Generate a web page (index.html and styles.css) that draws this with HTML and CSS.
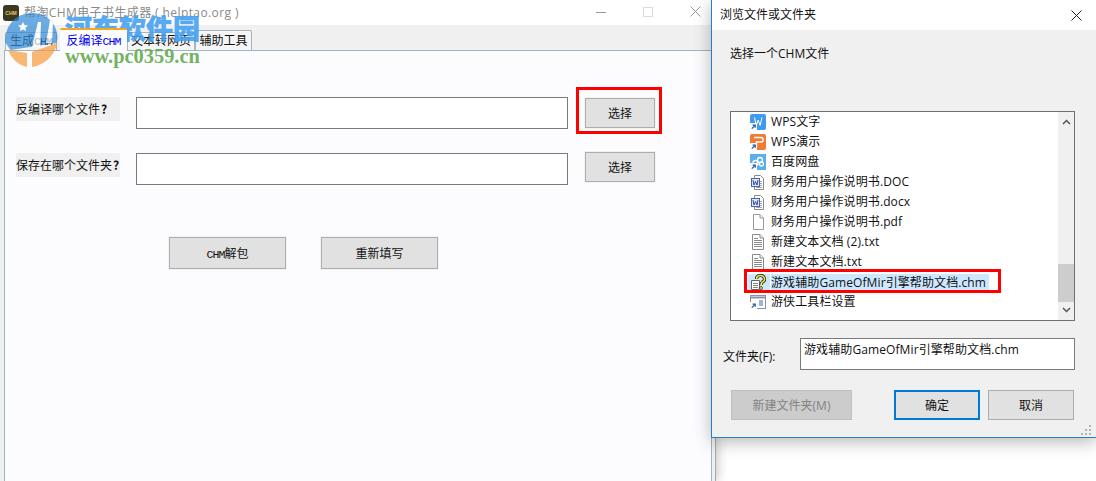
FILE: index.html
```html
<!DOCTYPE html>
<html lang="zh-CN">
<head>
<meta charset="utf-8">
<title>帮淘CHM电子书生成器</title>
<link rel="stylesheet" href="styles.css">
</head>
<body>
<svg class="defs" width="0" height="0" aria-hidden="true">
  <defs>
    <symbol id="doc" viewBox="0 0 16 16">
      <path d="M3.500 .5h6.500l3.500 3.500v11.500h-10z" fill="#fff" stroke="#9a9a9a"/>
      <path d="M10 .5v3.500h3.500" fill="#f0f0f0" stroke="#9a9a9a"/>
    </symbol>
    <symbol id="txt" viewBox="0 0 16 16">
      <path d="M2.500 .5h7.500l3.500 3.500v11.500h-11z" fill="#fff" stroke="#8a8a8a"/>
      <path d="M10 .5v3.500h3.500" fill="#eee" stroke="#8a8a8a"/>
      <path d="M4 4.500h4M4 6.500h8M4 8.500h8M4 10.500h8M4 12.500h8" stroke="#8a8a8a" fill="none"/>
    </symbol>
    <symbol id="word" viewBox="0 0 16 16">
      <path d="M4.500 1.500h6l3 3v11h-9z" fill="#fff" stroke="#8a8a8a"/>
      <path d="M10 7.500h2M10 9.500h2M10 11.500h2M6 13.500h6" stroke="#9aa4c4"/>
      <rect x="1.500" y="4.500" width="8" height="8" fill="#dfe6f6" stroke="#4a62a8"/>
      <path d="M3 6l1 5 1.500-3.500L7 11l1-5" stroke="#2f4da0" fill="none"/>
    </symbol>
    <symbol id="arrow" viewBox="0 0 8 8">
      <rect width="8" height="8" fill="#fff"/>
      <path d="M2 6.500l3-3M3 2.500h3v3" stroke="#1f4f9c" stroke-width="1.300" fill="none"/>
    </symbol>
  </defs>
</svg>

<main class="app">
  <header class="app-title">
    <span class="app-logo">CHM</span>
    <span class="app-name">帮淘CHM电子书生成器 ( helptao.org )</span>
    <span class="win-btns">
      <svg width="10" height="10" viewBox="0 0 10 10"><path d="M0 5.500h10" stroke="#999"/></svg>
      <svg width="10" height="10" viewBox="0 0 10 10"><rect x=".5" y=".5" width="9" height="9" fill="none" stroke="#ddd"/></svg>
      <svg width="11" height="11" viewBox="0 0 11 11"><path d="M.5 .5l10 10M10.500 .5l-10 10" stroke="#999"/></svg>
    </span>
  </header>
  <nav class="tabs">
    <span class="tab tab-first">生成<span class="mono">CHM</span></span>
    <span class="tab tab-active">反编译<span class="mono">CHM</span></span>
    <span class="tab tab-third">文本转网页</span>
    <span class="tab tab-fourth">辅助工具</span>
  </nav>
  <section class="panel">
    <div class="form">
      <span class="label">反编译哪个文件<b>?</b></span>
      <span class="field"></span>
      <button class="btn btn-pick-a">选择</button>
      <span class="label">保存在哪个文件夹<b>?</b></span>
      <span class="field"></span>
      <button class="btn btn-pick-b">选择</button>
    </div>
    <div class="actions">
      <button class="btn btn-wide"><span class="mono">CHM</span>解包</button>
      <button class="btn btn-wide">重新填写</button>
    </div>
    <span class="red-box red-pick"></span>
  </section>
</main>

<aside class="dialog">
  <header class="dlg-title">
    <span class="raise">浏览文件或文件夹</span>
    <svg width="11" height="11" viewBox="0 0 11 11"><path d="M.5 .5l10 10M10.500 .5l-10 10" stroke="#222"/></svg>
  </header>
  <div class="dlg-body">
    <p class="dlg-prompt">选择一个CHM文件</p>
    <div class="list">
      <ul class="items">
        <li class="item">
          <svg class="ico" viewBox="0 0 16 16"><rect width="16" height="16" rx="2" fill="#3f9bf0"/><path d="M4.500 3.500l1.800 8 1.900-5.500 1.900 5.500 1.800-8" stroke="#fff" fill="none"/><use href="#arrow" width="7" height="7" y="9"/></svg>
          <span class="raise">WPS文字</span>
        </li>
        <li class="item">
          <svg class="ico" viewBox="0 0 16 16"><rect width="16" height="16" rx="2" fill="#f47a32"/><path d="M4 3.500h7a2.200 2.200 0 0 1 0 4.500H6.500v5" stroke="#fff" stroke-width="1.400" fill="none"/><use href="#arrow" width="7" height="7" y="9"/></svg>
          <span class="raise">WPS演示</span>
        </li>
        <li class="item">
          <svg class="ico" viewBox="0 0 16 16"><rect width="16" height="16" fill="#5aaef0"/><circle cx="5.500" cy="9" r="2.500" fill="none" stroke="#fff" stroke-width="1.300"/><circle cx="10" cy="6" r="2.500" fill="none" stroke="#fff" stroke-width="1.300"/><circle cx="11.500" cy="10" r="2" fill="none" stroke="#fff" stroke-width="1.300"/><use href="#arrow" width="7" height="7" y="9"/></svg>
          <span class="raise">百度网盘</span>
        </li>
        <li class="item"><svg class="ico"><use href="#word"/></svg><span class="raise">财务用户操作说明书.DOC</span></li>
        <li class="item"><svg class="ico"><use href="#word"/></svg><span class="raise">财务用户操作说明书.docx</span></li>
        <li class="item"><svg class="ico"><use href="#doc"/></svg><span class="raise">财务用户操作说明书.pdf</span></li>
        <li class="item"><svg class="ico"><use href="#txt"/></svg><span class="raise">新建文本文档 (2).txt</span></li>
        <li class="item"><svg class="ico"><use href="#txt"/></svg><span class="raise">新建文本文档.txt</span></li>
        <li class="item item-selected">
          <svg class="ico" viewBox="0 0 16 16"><path d="M1.500 6.500h8v9h-8z" fill="#fff" stroke="#666"/><path d="M3 9.500h5M3 11.500h5M3 13.500h5" stroke="#888"/><path d="M6.500 5a4 3.500 0 1 1 6 3c-1.500 1-1.500 1.500-1.500 3" fill="none" stroke="#222" stroke-width="3.200"/><path d="M6.500 5a4 3.500 0 1 1 6 3c-1.500 1-1.500 1.500-1.500 3" fill="none" stroke="#f5e23c" stroke-width="1.600"/><circle cx="11" cy="14" r="1.500" fill="#f5e23c" stroke="#222" stroke-width=".7"/></svg>
          <span class="sel-text">游戏辅助GameOfMir引擎帮助文档.chm</span>
        </li>
        <li class="item">
          <svg class="ico" viewBox="0 0 16 16"><rect x=".5" y="1.500" width="15" height="13" fill="#fff" stroke="#8b94a5"/><path d="M.5 3.500h15" stroke="#8b94a5" stroke-width="2"/><path d="M9 7h4M9 9h4M9 11h4" stroke="#3b6fb5"/><use href="#arrow" width="7" height="7" y="8"/></svg>
          <span class="raise">游侠工具栏设置</span>
        </li>
      </ul>
      <div class="scroll">
        <svg width="9" height="6" viewBox="0 0 9 6"><path d="M1 5l3.500-3.500L8 5" fill="none" stroke="#555" stroke-width="1.500"/></svg>
        <span class="thumb"></span>
        <svg width="9" height="6" viewBox="0 0 9 6"><path d="M1 1l3.500 3.500L8 1" fill="none" stroke="#555" stroke-width="1.500"/></svg>
      </div>
      <span class="red-box red-item"></span>
    </div>
    <div class="folder">
      <span class="folder-label">文件夹(F):</span>
      <span class="folder-input">游戏辅助GameOfMir引擎帮助文档.chm</span>
    </div>
    <div class="dlg-actions">
      <button class="dbtn dbtn-off">新建文件夹(M)</button>
      <button class="dbtn dbtn-ok">确定</button>
      <button class="dbtn">取消</button>
    </div>
    <svg class="grip" width="10" height="10" viewBox="0 0 10 10"><path d="M8 0h2v2H8zM4 4h2v2H4zM8 4h2v2H8zM0 8h2v2H0zM4 8h2v2H4zM8 8h2v2H8z" fill="#b5b5b5"/></svg>
  </div>
</aside>

<div class="watermark">
  <svg class="wm-logo" width="56" height="58" viewBox="0 0 56 58">
    <path d="M0 33C0 15 12 4 27 4c14 0 25 10 25.500 25l-1 5-46 7z" fill="#2f8ad6"/>
    <path d="M27 38L33 13l3 0-1 26zM41 34l4-23 3 3-1 20z" fill="#fff"/>
    <path d="M18 13l1.500 3 3.500 .5-2.500 2.200.6 3.300-3.100-1.600-3.100 1.600.6-3.300-2.500-2.200 3.500-.5z" fill="#fff"/>
    <path d="M3 41l19 3v14C13 56 7 50 3 41z" fill="#f89a3c"/>
    <path d="M27 43l25-9c-2 12-12 22-25 24z" fill="#f89a3c"/>
  </svg>
  <div class="wm-text">
    <span class="wm-cn">河东软件园</span>
    <span class="wm-url">www.pc0359.cn</span>
  </div>
</div>
</body>
</html>
```

FILE: styles.css
```css
* { box-sizing: border-box; }
html, body { margin: 0; height: 100%; }
body {
  width: 1096px;
  height: 481px;
  overflow: hidden;
  position: relative;
  background: #fff;
  font: 12px "Open Sans", "Noto Sans CJK SC", sans-serif;
  color: #111;
}
.defs { position: absolute; }
.mono { font: 11.500px "Liberation Mono", monospace; letter-spacing: -.9px; }
.raise { position: relative; top: -1px; }

.app {
  position: absolute;
  left: 0;
  top: 0;
  width: 716px;
  height: 481px;
  display: flex;
  flex-direction: column;
  background: #f0f0f0;
  border-right: 1px solid #a8a8a8;
  box-shadow: 2px 0 10px rgba(0,0,0,.22);
}
.app-title {
  height: 25px;
  flex: none;
  background: #fff;
  display: flex;
  align-items: center;
  padding-left: 3px;
}
.app-logo {
  width: 16px;
  height: 16px;
  border-radius: 3px;
  background: #3a3a20;
  color: #e8c860;
  font: bold 5px "Liberation Sans", sans-serif;
  display: flex;
  align-items: center;
  justify-content: center;
  margin-right: 5px;
}
.app-name {
  color: #8a8a8a;
  font-size: 12px;
  letter-spacing: .4px;
  position: relative;
  top: -1px;
}
.win-btns {
  margin-left: auto;
  display: flex;
  align-items: center;
  gap: 37px;
  padding-right: 14px;
  padding-bottom: 2px;
}

.tabs {
  height: 25px;
  flex: none;
  display: flex;
  align-items: flex-end;
  padding-left: 5px;
  font-family: "Noto Sans CJK SC", sans-serif;
}
.tab {
  height: 18px;
  border: 1px solid #a8b4c0;
  border-bottom: 0;
  background: #f5f5f5;
  font-size: 12px;
  line-height: 14px;
  text-align: center;
  color: #111;
  border-radius: 2px 2px 0 0;
}
.tab-first { width: 52px; margin-right: 3px; }
.tab-active {
  width: 67px;
  height: 23px;
  background: #fcfcff;
  color: #0000f0;
  border: 0;
  border-top: 2px solid #f5a623;
  line-height: 19px;
  position: relative;
  z-index: 1;
  margin-bottom: -1px;
}
.tab-third { width: 68px; }
.tab-fourth { width: 57px; height: 20px; line-height: 18px; }

.panel {
  flex: 1;
  margin-left: 4px;
  margin-right: 3px;
  background: #fcfcff;
  border: 1px solid #9fb4c6;
  border-bottom: 0;
  position: relative;
  padding: 46px 0 0 11px;
  font-family: "Noto Sans CJK SC", sans-serif;
}
.form {
  display: grid;
  grid-template-columns: 104px 432px 70px;
  grid-auto-rows: 32px;
  column-gap: 16px;
  row-gap: 24px;
}
.label {
  height: 24px;
  background: #f0f0f0;
  font-size: 12px;
  line-height: 24px;
  white-space: nowrap;
}
.label b { margin-left: 1px; }
.field {
  border: 1px solid #7a7a7a;
  background: #fff;
}
.btn {
  height: 30px;
  width: 70px;
  padding: 0 0 1px;
  background: #e1e1e1;
  border: 1px solid #adadad;
  outline: 1px solid #f2f2f2;
  font: 12px "Noto Sans CJK SC", sans-serif;
  color: #111;
}
.btn-pick-a { margin: 1px 0 0 1px; }
.btn-pick-b { margin: -1px 0 0 1px; }
.actions {
  display: flex;
  gap: 35px;
  margin: 52px 0 0 153px;
}
.btn-wide { width: 117px; height: 32px; }
.red-box {
  position: absolute;
  border: 3px solid #f00;
  pointer-events: none;
}
.red-pick { left: 571px; top: 36px; width: 86px; height: 47px; }

.dialog {
  position: absolute;
  left: 711px;
  top: 0;
  width: 385px;
  height: 438px;
  display: flex;
  flex-direction: column;
  border: 1px solid #2b7cc4;
  border-top: 0;
  border-right: 0;
  box-shadow: 0 4px 16px rgba(0,0,0,.28);
}
.dlg-title {
  height: 30px;
  flex: none;
  background: #fff;
  display: flex;
  align-items: center;
  justify-content: space-between;
  padding: 0 14px 0 8px;
}
.dlg-body {
  flex: 1;
  background: #f0f0f0;
  position: relative;
  padding: 0 0 0 18px;
}
.dlg-prompt {
  margin: 15px 0 0;
  line-height: 17px;
}
.list {
  position: relative;
  width: 345px;
  height: 210px;
  margin-top: 49px;
  background: #fff;
  border: 1px solid #6f6f6f;
  display: flex;
  justify-content: space-between;
}
.items {
  list-style: none;
  margin: 0;
  padding: 0 0 0 19px;
  letter-spacing: .1px;
}
.item {
  height: 20px;
  display: flex;
  align-items: center;
  gap: 5px;
  white-space: nowrap;
}
.ico { width: 16px; height: 16px; flex: none; }
.sel-text {
  background: #cce8ff;
  line-height: 17px;
  padding-right: 3px;
  display: block;
  position: relative;
}
.item-selected { position: relative; }
.item-selected::before {
  content: "";
  position: absolute;
  left: -2px;
  top: 2px;
  width: 22px;
  height: 17px;
  background: #cce8ff;
}
.item-selected .ico { position: relative; }
.scroll {
  width: 16px;
  background: #f0f0f0;
  display: flex;
  flex-direction: column;
  align-items: center;
  justify-content: space-between;
  padding: 7px 0;
  position: relative;
}
.thumb {
  position: absolute;
  left: 0;
  top: 152px;
  width: 16px;
  height: 38px;
  background: #cdcdcd;
}
.red-item { left: 13px; top: 157px; width: 257px; height: 24px; }
.folder {
  display: flex;
  align-items: flex-start;
  margin-top: 17px;
  margin-left: -7px;
}
.folder-label { width: 77px; padding-top: 9px; }
.folder-input {
  width: 275px;
  height: 32px;
  background: #fff;
  border: 1px solid #7a7a7a;
  padding: 3px 3px;
  line-height: 16px;
  letter-spacing: .1px;
  white-space: nowrap;
}
.dlg-actions {
  display: flex;
  margin-top: 20px;
  margin-left: 1px;
}
.dbtn {
  width: 86px;
  height: 30px;
  padding: 0 0 1px;
  background: #e1e1e1;
  border: 1px solid #adadad;
  font: 12px "Open Sans", "Noto Sans CJK SC", sans-serif;
  color: #111;
  margin-right: 8px;
}
.dbtn-off {
  width: 121px;
  margin-right: 42px;
  background: #ccc;
  border-color: #bfbfbf;
  color: #838383;
}
.dbtn-ok { border: 2px solid #0078d7; }
.grip { position: absolute; right: 5px; bottom: 2px; }

.watermark {
  position: absolute;
  left: 5px;
  top: 9px;
  display: flex;
  pointer-events: none;
}
.wm-logo { opacity: .7; }
.wm-text {
  display: flex;
  flex-direction: column;
  margin-left: 4px;
}
.wm-cn {
  font: 900 27px/37px "Noto Sans CJK SC", sans-serif;
  color: rgba(66,160,240,.9);
  -webkit-text-stroke: .5px rgba(66,160,240,.9);
}
.wm-url {
  font: bold 20.400px/20px "Liberation Serif", serif;
  color: rgba(95,170,75,.9);
}
```
